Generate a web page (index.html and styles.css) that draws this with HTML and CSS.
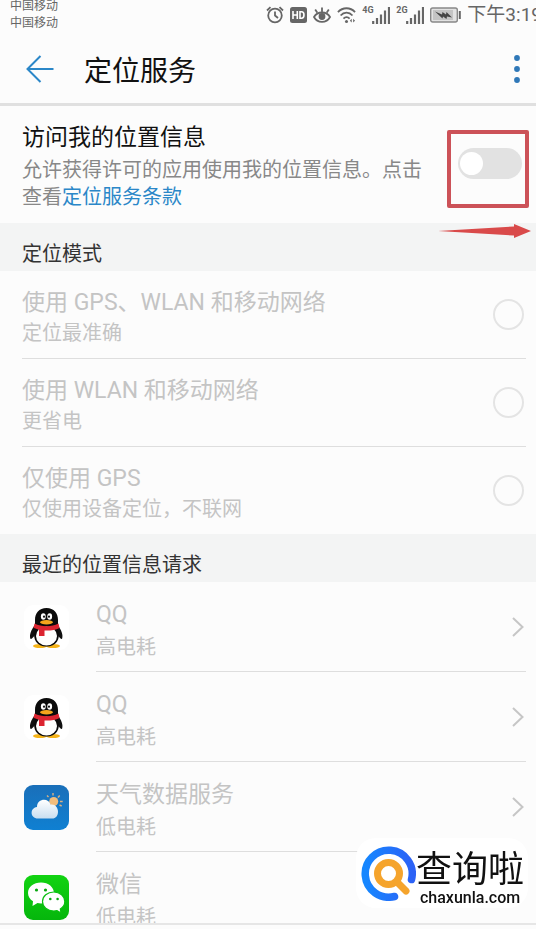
FILE: index.html
```html
<!DOCTYPE html>
<html lang="zh-CN">
<head>
  <meta charset="UTF-8">
  <meta name="viewport" content="width=device-width, initial-scale=1.0">
  <title>定位服务</title>
  <link rel="stylesheet" href="styles.css">
</head>
<body>
  <!-- Shared icons -->
  <svg class="sprite" aria-hidden="true">
    <symbol id="signal" viewBox="0 0 18 18">
      <path d="M1.200 15v3M5 12v6M9 8.500v9.500M13 4.500v13.500M17 1v17" stroke="#666" stroke-width="2.200" fill="none"/>
    </symbol>
    <symbol id="chevron" viewBox="0 0 12 20">
      <path d="M1 1l9.500 9L1 19" fill="none" stroke="#c6c6c6" stroke-width="2"/>
    </symbol>
    <symbol id="qq" viewBox="0 0 45 45">
      <rect width="45" height="45" rx="9" fill="#fff"/>
      <ellipse cx="16" cy="41" rx="7" ry="2" fill="#f5b318"/>
      <ellipse cx="29" cy="41" rx="7" ry="2" fill="#f5b318"/>
      <path d="M11 20C7 25 5 30 6.500 34c1.500 0 3-2 4-3.500h23.500c1 1.500 2.500 3.500 4 3.500 1.500-4-.5-9-4.500-14z" fill="#111"/>
      <path d="M22.500 3C15 3 11 8 11 15v10C8 34 13 41.500 22.500 41.500S37 34 34 25V15C34 8 30 3 22.500 3z" fill="#0b0b0b"/>
      <ellipse cx="22.500" cy="31" rx="10.500" ry="9.500" fill="#fff"/>
      <path d="M10.500 18.500c7 3.500 17 3.500 24 0l1 4.500c-4 2-9 2.700-15 2.500V31h-5.500v-6.500c-2-.5-4-1-5.500-1.800z" fill="#dc2430"/>
      <ellipse cx="19.300" cy="11.500" rx="2.400" ry="3.300" fill="#fff"/>
      <ellipse cx="25.700" cy="11.500" rx="2.400" ry="3.300" fill="#fff"/>
      <circle cx="20" cy="11.700" r="1.100" fill="#111"/>
      <circle cx="25" cy="11.700" r="1.100" fill="#111"/>
      <ellipse cx="22.500" cy="17.300" rx="6.500" ry="2.200" fill="#f6a51d"/>
    </symbol>
  </svg>

  <div class="screen">
    <!-- Status bar -->
    <div class="status-bar">
      <div class="carriers">
        <div>中国移动</div>
        <div>中国移动</div>
      </div>
      <div class="status-icons">
        <svg width="18" height="18" viewBox="0 0 18 18" fill="none" stroke="#666" stroke-width="1.800">
          <circle cx="9" cy="9.500" r="6.800"/>
          <path d="M9 5.500v4l3 2.500M1 4.500L4.500 1.200M17 4.500l-3.500-3.300"/>
        </svg>
        <svg width="17" height="18" viewBox="0 0 17 18">
          <rect y="1" width="17" height="16" rx="2.500" fill="#666"/>
          <path d="M3 5v8M7.300 5v8M3 9h4.300M10 5.800h1.500c3.300 0 3.300 6.400 0 6.400H10z" fill="none" stroke="#fff" stroke-width="1.600"/>
        </svg>
        <svg width="18" height="18" viewBox="0 0 18 18" fill="none" stroke="#666" stroke-width="1.800">
          <path d="M1 11c3.500-6 12.500-6 16 0-3.500 6.500-12.500 6.500-16 0zM9 5.500V1.500M4.200 6.500L2.200 3.500M13.800 6.500l2-3"/>
          <circle cx="9" cy="10.500" r="2.500" fill="#666"/>
        </svg>
        <svg width="19" height="18" viewBox="0 0 20 18" fill="none" stroke="#666" stroke-width="1.900">
          <path d="M1 6c5-5.500 13-5.500 18 0M3.800 9.500c3.500-4 9-4 12.500 0M6.800 12.800c2-2 4.500-2 6.500 0"/>
          <circle cx="10" cy="15.800" r="1.600" fill="#666" stroke="none"/>
          <path d="M15.500 13v4l-2-2zM17 13v4l2-2z" fill="#666" stroke="none"/>
        </svg>
        <div class="network"><span>4G</span><svg width="18" height="18"><use href="#signal"/></svg></div>
        <div class="network"><span>2G</span><svg width="18" height="18"><use href="#signal"/></svg></div>
        <svg width="31" height="18" viewBox="0 0 31 18">
          <rect x=".7" y="2" width="26.600" height="14" rx="2" fill="#e2e2e2" stroke="#888" stroke-width="1.400"/>
          <rect x="3" y="4" width="20" height="10" fill="#c4c4c4"/>
          <path d="M5 5.500l7 3 .5-2.500 3.500 2.500.5-2.500L22 11.500l-5-1-.5 2.500-3.500-2.500-.5 2z" fill="#444"/>
          <path d="M29.800 5v8" stroke="#666" stroke-width="2"/>
        </svg>
        <span class="clock">下午3:19</span>
      </div>
    </div>

    <!-- Title bar -->
    <header class="title-bar">
      <button class="icon-btn" type="button" aria-label="返回">
        <svg width="28" height="28" viewBox="0 0 28 28" fill="none" stroke="#2b87c8" stroke-width="2">
          <path d="M14.500 1L1.500 14l13 13M1.500 14H27.500"/>
        </svg>
      </button>
      <h1>定位服务</h1>
      <button class="icon-btn" type="button" aria-label="更多">
        <svg width="6" height="28" viewBox="0 0 6 28" fill="#2f78b8">
          <circle cx="3" cy="3" r="2.900"/>
          <circle cx="3" cy="14" r="2.900"/>
          <circle cx="3" cy="25" r="2.900"/>
        </svg>
      </button>
    </header>

    <main class="content">
      <!-- Location access switch -->
      <section class="access">
        <div class="access-text">
          <label for="access">访问我的位置信息</label>
          <p>允许获得许可的应用使用我的位置信息。点击查看<a href="#">定位服务条款</a></p>
        </div>
        <div class="switch-wrap">
          <input class="switch" type="checkbox" id="access">
          <div class="highlight"></div>
          <svg class="pointer" width="94" height="16" viewBox="0 0 94 16">
            <path d="M0 8l76-4.500V1l17 7-17 7v-2.500z" fill="#d94a4a"/>
          </svg>
        </div>
      </section>

      <!-- Location mode -->
      <h2>定位模式</h2>
      <div class="modes">
        <div class="mode">
          <label for="mode-all"><span class="name">使用 GPS、WLAN 和移动网络</span><span class="note">定位最准确</span></label>
          <input type="radio" name="mode" id="mode-all" disabled>
        </div>
        <div class="mode">
          <label for="mode-wlan"><span class="name">使用 WLAN 和移动网络</span><span class="note">更省电</span></label>
          <input type="radio" name="mode" id="mode-wlan" disabled>
        </div>
        <div class="mode">
          <label for="mode-gps"><span class="name">仅使用 GPS</span><span class="note">仅使用设备定位，不联网</span></label>
          <input type="radio" name="mode" id="mode-gps" disabled>
        </div>
      </div>

      <!-- Recent requests -->
      <h2>最近的位置信息请求</h2>
      <div class="apps">
        <a class="app" href="#">
          <svg width="45" height="45"><use href="#qq"/></svg>
          <span class="app-body">
            <span class="app-text"><span class="name">QQ</span><span class="note">高电耗</span></span>
            <svg width="12" height="20"><use href="#chevron"/></svg>
          </span>
        </a>
        <a class="app" href="#">
          <svg width="45" height="45"><use href="#qq"/></svg>
          <span class="app-body">
            <span class="app-text"><span class="name">QQ</span><span class="note">高电耗</span></span>
            <svg width="12" height="20"><use href="#chevron"/></svg>
          </span>
        </a>
        <a class="app" href="#">
          <svg width="45" height="45" viewBox="0 0 45 45">
            <defs>
              <linearGradient id="sky" x2="0" y2="1"><stop stop-color="#1a6fb9"/><stop offset="1" stop-color="#0f80d2"/></linearGradient>
              <linearGradient id="cloud" x2="0" y2="1"><stop stop-color="#fff"/><stop offset="1" stop-color="#c9def0"/></linearGradient>
            </defs>
            <rect width="45" height="45" rx="9" fill="url(#sky)"/>
            <circle cx="29.700" cy="16.500" r="4.500" fill="#f3bd7c"/>
            <path d="M29 10.500V8M24.500 12L23 10.500M34 12.500l1.700-2M36 16.500h2.700M35.500 20l2.200 1" stroke="#d9b184" stroke-width="1.400"/>
            <path d="M14 33.500c-8 0-8.500-10.500-1-11.500 0-8.500 11.500-9.500 13.500-2.500 9-1.500 10.500 14 1.500 14z" fill="url(#cloud)"/>
          </svg>
          <span class="app-body">
            <span class="app-text"><span class="name">天气数据服务</span><span class="note">低电耗</span></span>
            <svg width="12" height="20"><use href="#chevron"/></svg>
          </span>
        </a>
        <a class="app" href="#">
          <svg width="45" height="45" viewBox="0 0 45 45">
            <defs>
              <linearGradient id="green" x2="0" y2="1"><stop stop-color="#12d312"/><stop offset="1" stop-color="#05b60c"/></linearGradient>
            </defs>
            <rect width="45" height="45" rx="9" fill="url(#green)"/>
            <path d="M17 7.500C9.500 7.500 4 12 4 18c0 3.500 2 6.500 5 8.300L8.500 31l5-3c1 .3 2 .4 3.500.4 7.500 0 13-4.600 13-10.400S24.500 7.500 17 7.500z" fill="#fff"/>
            <path d="M29.800 17c-6.500 0-11.300 4.200-11.300 9.500s4.800 9.500 11.300 9.500c1.200 0 2.200-.1 3.200-.4l4 2.400-.7-4c2.800-1.800 4.500-4.500 4.500-7.500 0-5.300-4.800-9.500-11-9.500z" fill="#fff" stroke="#0abf10" stroke-width="1.200"/>
            <g fill="#0aa811">
              <circle cx="12.500" cy="15" r="1.600"/>
              <circle cx="21.500" cy="15" r="1.600"/>
              <circle cx="26.300" cy="24" r="1.300"/>
              <circle cx="33.600" cy="24" r="1.300"/>
            </g>
          </svg>
          <span class="app-body">
            <span class="app-text"><span class="name">微信</span><span class="note">低电耗</span></span>
            <svg width="12" height="20"><use href="#chevron"/></svg>
          </span>
        </a>
      </div>
    </main>
  </div>

  <!-- Site mark -->
  <div class="site-mark">
    <svg width="55" height="55" viewBox="0 0 55 55" fill="none" stroke-linecap="round">
      <defs>
        <linearGradient id="ring" x1="1" x2="0" y2="0"><stop stop-color="#2c62f6"/><stop offset="1" stop-color="#1687ff"/></linearGradient>
      </defs>
      <path d="M50.500 33.500A23.500 23.500 0 1 0 33.500 50.500" stroke="url(#ring)" stroke-width="7.500"/>
      <circle cx="27.500" cy="27.500" r="11" stroke="#f5a42c" stroke-width="7"/>
      <path d="M36 36l9 9" stroke="#f5a42c" stroke-width="7"/>
    </svg>
    <div class="site-text">
      <div class="site-name">查询啦</div>
      <div class="site-url">chaxunla.com</div>
    </div>
  </div>
</body>
</html>
```
FILE: styles.css
```css
/* General Styles */
* {
  box-sizing: border-box;
}

body {
  font-family: Roboto, "Noto Sans CJK SC", sans-serif;
  margin: 0;
  background-color: #fcfcfc;
  color: #111;
}

h1, h2, p {
  margin: 0;
  font-weight: normal;
}

a {
  text-decoration: none;
}

svg {
  display: block;
  flex-shrink: 0;
}

.sprite {
  position: absolute;
  width: 0;
  height: 0;
}

.screen {
  display: flex;
  flex-direction: column;
  height: 100vh;
  padding-bottom: 4px;
  overflow: hidden;
}

/* Status bar */
.status-bar {
  display: flex;
  justify-content: space-between;
  align-items: center;
  height: 29px;
  padding-left: 10px;
  flex-shrink: 0;
  color: #666;
  white-space: nowrap;
}

.carriers {
  font-size: 12px;
  line-height: 17px;
}

.status-icons {
  display: flex;
  align-items: center;
  gap: 6px;
  margin-right: -6px;
}

.network {
  display: flex;
  align-items: flex-start;
}

.network span {
  width: 10px;
  font-size: 9px;
  line-height: 9px;
  font-weight: bold;
}

.clock {
  font-size: 19px;
  line-height: 28px;
}

/* Title bar */
.title-bar {
  display: flex;
  align-items: center;
  height: 77px;
  padding: 6px 16px 0 26px;
  border-bottom: 3px solid #e0e0e0;
  flex-shrink: 0;
}

.title-bar h1 {
  flex: 1;
  margin-left: 30px;
  padding-top: 6px;
  font-size: 28px;
  line-height: 40px;
}

.icon-btn {
  padding: 0;
  border: none;
  background: none;
  cursor: pointer;
}

.content {
  flex: 1;
  min-height: 0;
  overflow: hidden;
  border-bottom: 2px solid #e6e6e6;
}

/* Location access switch */
.access {
  display: flex;
  padding: 16px 14px 12px 22px;
}

.access-text {
  flex: 1;
}

.access-text label {
  display: block;
  font-size: 23px;
  line-height: 32px;
}

.access-text p {
  max-width: 402px;
  margin-top: 3px;
  color: #888;
  font-size: 20px;
  line-height: 27px;
}

.access-text a {
  color: #2b87c8;
}

.switch-wrap {
  position: relative;
  width: 64px;
  padding-top: 26px;
}

.switch {
  display: block;
  appearance: none;
  width: 64px;
  height: 31px;
  margin: 0;
  padding: 4px 2px;
  border-radius: 16px;
  background-color: #e2e2e2;
}

.switch::before {
  content: "";
  display: block;
  width: 23px;
  height: 23px;
  border-radius: 50%;
  background-color: #fff;
}

.switch:checked {
  background-color: #2b87c8;
}

.switch:checked::before {
  margin-left: 37px;
}

.highlight {
  position: absolute;
  top: 8px;
  left: -11px;
  width: 82px;
  height: 78px;
  border: 4px solid #cc5258;
  border-radius: 2px;
  pointer-events: none;
}

.pointer {
  position: absolute;
  top: 101px;
  left: -20px;
}

/* Section headings */
h2 {
  padding: 16px 22px 2px;
  background-color: #f3f4f4;
  color: #333;
  font-size: 20px;
  line-height: 30px;
}

/* Rows */
.name,
.note {
  display: block;
  color: #c4c4c4;
}

.name {
  font-size: 23px;
}

.note {
  font-size: 20px;
}

.modes {
  padding: 0 10px 0 22px;
}

.mode {
  display: flex;
  align-items: center;
  padding-right: 2px;
  border-bottom: 1px solid #dedede;
  line-height: 30px;
}

.mode:last-child {
  border-bottom: none;
}

.mode label {
  flex: 1;
  padding: 17px 0 10px;
}

.mode input {
  appearance: none;
  width: 31px;
  height: 31px;
  margin: 0;
  border: 2px solid #e4e4e4;
  border-radius: 50%;
}

.app {
  display: flex;
  align-items: center;
  gap: 27px;
  padding: 0 10px 0 24px;
}

.app-body {
  display: flex;
  align-items: center;
  flex: 1;
  padding-right: 2px;
  border-bottom: 1px solid #dedede;
  line-height: 32px;
}

.app-text {
  flex: 1;
  padding: 17px 0 8px;
}

/* Site mark */
.site-mark {
  position: fixed;
  right: 8px;
  bottom: 21px;
  display: flex;
  align-items: center;
  padding: 1px 4px 1px 5px;
  border-radius: 20px;
  background-color: #fff;
  color: #111;
}

.site-text {
  padding-top: 12px;
}

.site-name {
  font-size: 36px;
  line-height: 38px;
}

.site-url {
  padding-left: 4px;
  font-size: 16px;
  line-height: 18px;
  font-weight: 500;
}
```
